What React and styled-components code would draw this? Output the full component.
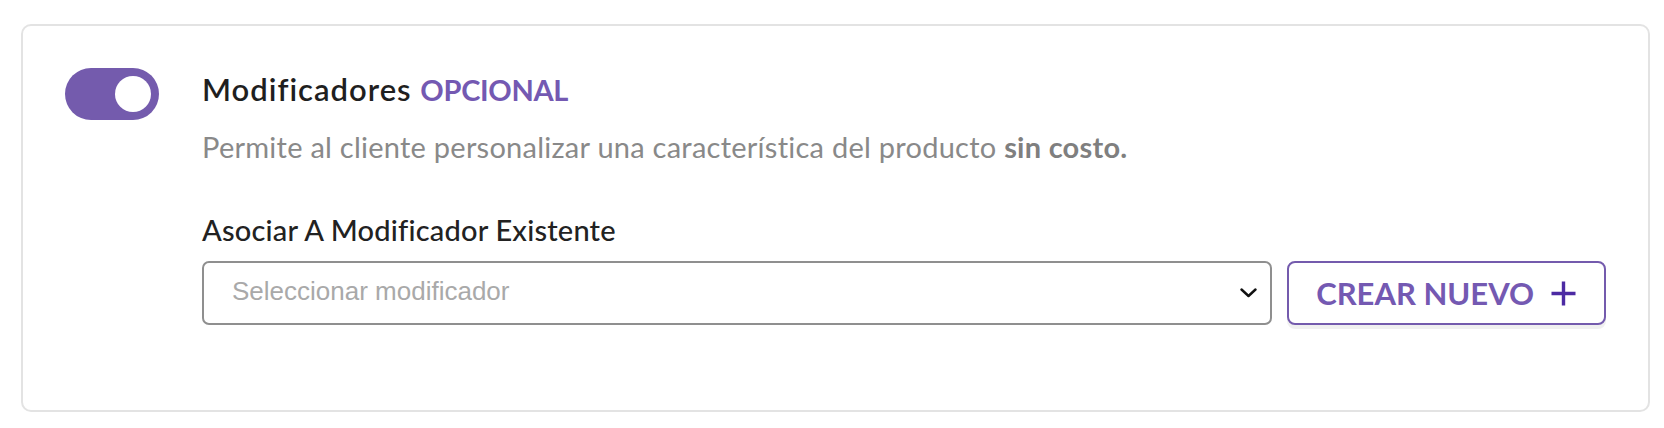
import React from "react";
import styled, { createGlobalStyle } from "styled-components";

const GlobalStyle = createGlobalStyle`
  html, body { margin: 0; padding: 0; background: #ffffff; }
  body { font-family: "Lato", "Noto Sans", sans-serif; }
  * { box-sizing: border-box; }
`;

const Page = styled.div`
  padding: 24px 14px 16px 21px;
`;

const Card = styled.section`
  display: flex;
  align-items: flex-start;
  gap: 43px;
  border: 2px solid #e3e3e3;
  border-radius: 10px;
  background: #ffffff;
  padding: 42px 42px 85px 42px;
`;

const Toggle = styled.button`
  flex: none;
  display: flex;
  align-items: center;
  justify-content: ${(p) => (p.$on ? "flex-end" : "flex-start")};
  width: 94px;
  height: 52px;
  padding: 0 8px;
  border: none;
  border-radius: 26px;
  background: ${(p) => (p.$on ? "#745bad" : "#cfcfcf")};
  cursor: pointer;
`;

const Knob = styled.span`
  display: block;
  width: 36px;
  height: 36px;
  border-radius: 50%;
  background: #ffffff;
`;

const Content = styled.div`
  flex: 1;
  min-width: 0;
  display: flex;
  flex-direction: column;
  margin-top: 3px;
`;

const Title = styled.h2`
  margin: 0;
  font-family: "Lato", "Noto Sans", sans-serif;
  font-size: 31px;
  line-height: 36px;
  font-weight: 600;
  letter-spacing: 1px;
  color: #1f1f1f;
`;

const Optional = styled.span`
  font-size: 29px;
  font-weight: 700;
  letter-spacing: -0.3px;
  color: #7459b2;
  text-transform: uppercase;
`;

const Description = styled.p`
  margin: 21px 0 0 0;
  font-size: 29px;
  line-height: 36px;
  font-weight: 400;
  letter-spacing: 0.25px;
  color: #898989;
  strong { font-weight: 700; color: #7f7f7f; }
`;

const Label = styled.label`
  margin-top: 47px;
  font-size: 29px;
  line-height: 36px;
  font-weight: 500;
  letter-spacing: 0.2px;
  color: #222222;
`;

const Row = styled.div`
  display: flex;
  gap: 15px;
  margin-top: 13px;
`;

const SelectBox = styled.div`
  flex: 1;
  display: flex;
  align-items: center;
  justify-content: space-between;
  height: 64px;
  padding: 0 13px 4px 28px;
  border: 2px solid #8f8f8f;
  border-radius: 7px;
  background: #ffffff;
  cursor: pointer;
`;

const Placeholder = styled.span`
  font-family: "Liberation Sans", Arial, sans-serif;
  font-size: 26px;
  color: #a9a9a9;
`;

const Chevron = styled.svg`
  flex: none;
  width: 17px;
  height: 10px;
  margin-top: 4px;
`;

const CreateButton = styled.button`
  flex: none;
  display: flex;
  align-items: center;
  gap: 17px;
  height: 64px;
  padding: 0 28px 0 27px;
  border: 2px solid #745bad;
  border-radius: 8px;
  background: #ffffff;
  box-shadow: 0 4px 0 rgba(0, 0, 0, 0.06);
  font-family: "Lato", "Noto Sans", sans-serif;
  font-size: 31px;
  font-weight: 700;
  color: #7459b2;
  text-transform: uppercase;
  cursor: pointer;
`;

const PlusIcon = styled.svg`
  flex: none;
  width: 25px;
  height: 25px;
`;

export default function App() {
  return (
    <>
      <GlobalStyle />
      <Page>
        <Card>
          <Toggle $on aria-label="Activar modificadores">
            <Knob />
          </Toggle>
          <Content>
            <Title>
              Modificadores <Optional>Opcional</Optional>
            </Title>
            <Description>
              Permite al cliente personalizar una característica del producto{" "}
              <strong>sin costo.</strong>
            </Description>
            <Label>Asociar A Modificador Existente</Label>
            <Row>
              <SelectBox>
                <Placeholder>Seleccionar modificador</Placeholder>
                <Chevron viewBox="0 0 17 10">
                  <polyline
                    points="1.5,1.5 8.5,8 15.5,1.5"
                    fill="none"
                    stroke="#111"
                    strokeWidth="2.4"
                    strokeLinecap="round"
                    strokeLinejoin="round"
                  />
                </Chevron>
              </SelectBox>
              <CreateButton>
                Crear nuevo
                <PlusIcon viewBox="0 0 25 25">
                  <path
                    d="M12.5 0.5v24M0.5 12.5h24"
                    stroke="#4c2aa3"
                    strokeWidth="3.4"
                    fill="none"
                  />
                </PlusIcon>
              </CreateButton>
            </Row>
          </Content>
        </Card>
      </Page>
    </>
  );
}
